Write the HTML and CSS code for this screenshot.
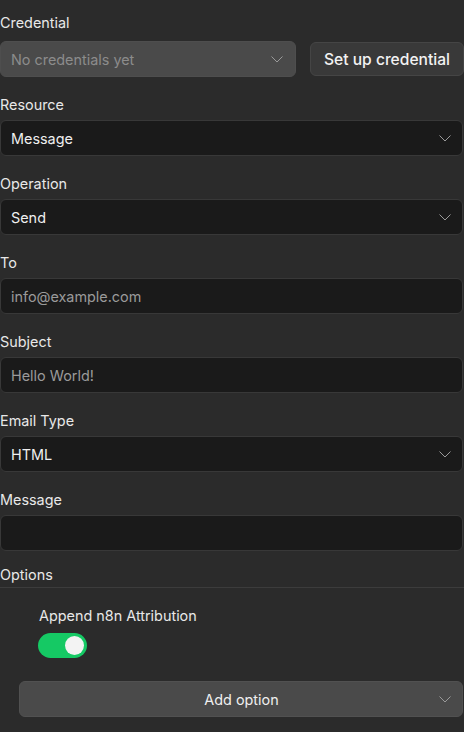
FILE: index.html
```html
<!DOCTYPE html>
<html lang="en">
<head>
<meta charset="utf-8">
<title>Send Email</title>
<link rel="stylesheet" href="styles.css">
</head>
<body>
<div class="panel">
  <div class="param cred">
    <div class="label">Credential</div>
    <div class="cred-row">
      <div class="select disabled">
        <span class="value placeholder">No credentials yet</span>
        <svg class="chev" width="12" height="7" viewBox="0 0 12 7"><polyline points="0.5,0.5 6,6 11.5,0.5" fill="none" stroke="currentColor" stroke-width="1"/></svg>
      </div>
      <button class="btn">Set up credential</button>
    </div>
  </div>

  <div class="param">
    <div class="label">Resource</div>
    <div class="select">
      <span class="value">Message</span>
      <svg class="chev" width="12" height="7" viewBox="0 0 12 7"><polyline points="0.5,0.5 6,6 11.5,0.5" fill="none" stroke="currentColor" stroke-width="1"/></svg>
    </div>
  </div>

  <div class="param">
    <div class="label">Operation</div>
    <div class="select">
      <span class="value">Send</span>
      <svg class="chev" width="12" height="7" viewBox="0 0 12 7"><polyline points="0.5,0.5 6,6 11.5,0.5" fill="none" stroke="currentColor" stroke-width="1"/></svg>
    </div>
  </div>

  <div class="param">
    <div class="label">To</div>
    <div class="input"><span class="value placeholder">info@example.com</span></div>
  </div>

  <div class="param">
    <div class="label">Subject</div>
    <div class="input"><span class="value placeholder">Hello World!</span></div>
  </div>

  <div class="param">
    <div class="label">Email Type</div>
    <div class="select">
      <span class="value">HTML</span>
      <svg class="chev" width="12" height="7" viewBox="0 0 12 7"><polyline points="0.5,0.5 6,6 11.5,0.5" fill="none" stroke="currentColor" stroke-width="1"/></svg>
    </div>
  </div>

  <div class="param last">
    <div class="label">Message</div>
    <div class="input"></div>
  </div>

  <div class="options">
    <div class="options-head">Options</div>
    <div class="option-item">
      <div class="label">Append n8n Attribution</div>
      <div class="switch on"><span class="knob"></span></div>
    </div>
    <div class="add-option">
      <span class="add-label">Add option</span>
      <svg class="chev" width="12" height="7" viewBox="0 0 12 7"><polyline points="0.5,0.5 6,6 11.5,0.5" fill="none" stroke="currentColor" stroke-width="1"/></svg>
    </div>
  </div>
</div>
</body>
</html>
```

FILE: styles.css
```css
html, body {
  margin: 0;
  padding: 0;
  background: #2b2b2b;
}
body {
  font-family: Inter, "Noto Sans", "Liberation Sans", sans-serif;
  font-size: 14.4px;
  color: #e8e8e8;
}
.panel {
  width: 463px;
  padding-top: 13px;
  display: flex;
  flex-direction: column;
}
.param {
  display: flex;
  flex-direction: column;
  gap: 5px;
  margin-bottom: 18px;
}
.param.cred {
  gap: 8px;
}
.param.last {
  margin-bottom: 14px;
}
.label {
  line-height: 20px;
  height: 20px;
  font-size: 14.4px;
  color: #e8e8e8;
}
.cred-row {
  display: flex;
  align-items: center;
  gap: 14px;
}
.select, .input {
  box-sizing: border-box;
  height: 36px;
  background: #1a1a1a;
  border: 1px solid #383838;
  border-radius: 6px;
  display: flex;
  align-items: center;
  padding: 0 11px 0 10px;
}
.select .value, .input .value {
  flex: 1;
  color: #efefef;
}
.value.placeholder {
  color: #9a9a9a;
}
.chev {
  color: #9a9a9a;
  flex: none;
}
.select.disabled {
  width: 296px;
  background: #4a4a4a;
  border-color: #4e4e4e;
  padding-right: 12px;
}
.select.disabled .value.placeholder {
  color: #8c8c8c;
}
.btn {
  box-sizing: border-box;
  flex: 1;
  height: 34px;
  margin-right: -1px;
  background: #393939;
  border: 1px solid #454545;
  border-radius: 6px;
  color: #f2f2f2;
  font-family: inherit;
  font-size: 15.6px;
  font-weight: 500;
  padding: 0;
  text-align: center;
}
.options {
  display: flex;
  flex-direction: column;
}
.options-head {
  line-height: 20px;
  padding-bottom: 2px;
  border-bottom: 1px solid #3c3c3c;
  margin-right: -1px;
}
.option-item {
  padding: 18px 0 0 38px;
  display: flex;
  flex-direction: column;
  gap: 7px;
}
.option-item .label {
  padding-left: 1px;
}
.switch {
  box-sizing: border-box;
  width: 49px;
  height: 25px;
  border-radius: 13px;
  background: #15c964;
  display: flex;
  align-items: center;
  justify-content: flex-end;
  padding-right: 3px;
}
.knob {
  width: 19px;
  height: 19px;
  border-radius: 50%;
  background: #f3f3f3;
}
.add-option {
  box-sizing: border-box;
  margin: 23px 0 0 19px;
  height: 36px;
  background: #4a4a4a;
  border: 1px solid #515151;
  border-radius: 6px;
  display: flex;
  align-items: center;
  padding: 0 11px 0 10px;
}
.add-label {
  flex: 1;
  text-align: center;
  padding-left: 14px;
  color: #efefef;
  font-size: 14.4px;
}
```
